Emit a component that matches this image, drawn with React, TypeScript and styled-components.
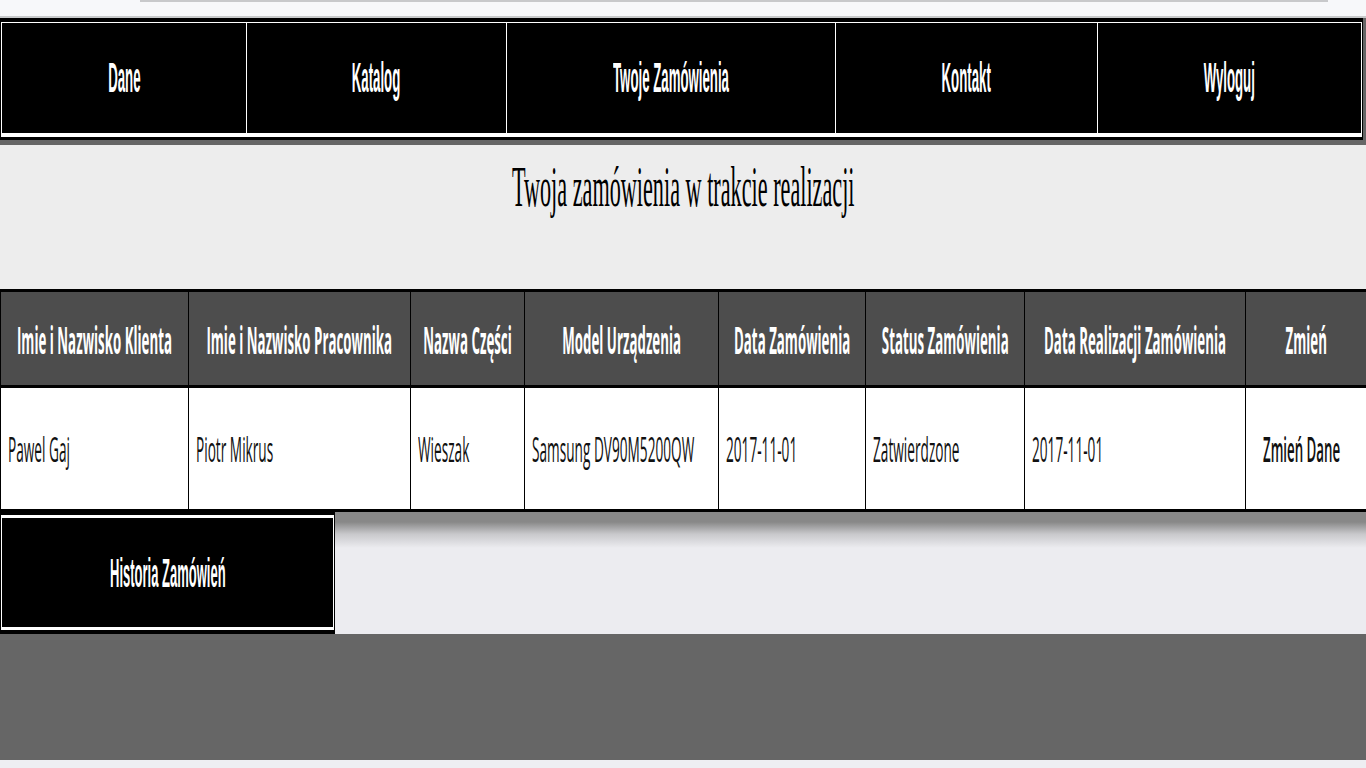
import React from "react";
import styled, { createGlobalStyle } from "styled-components";

const Global = createGlobalStyle`
  html, body { margin: 0; padding: 0; }
  body {
    background: #eeeef2;
    font-family: "Liberation Sans", Arial, sans-serif;
    overflow: hidden;
  }
`;

const Page = styled.div`
  width: 1366px;
  display: flex;
  flex-direction: column;
`;

const TopStrip = styled.div`
  height: 16px;
  background: #f7f8fa;
  border-bottom: 2px solid #c8cacb;
  display: flex;
`;

const ScrollThumb = styled.div`
  margin-left: 140px;
  width: 1188px;
  height: 2px;
  background: #c8c9cb;
`;

const NavShadow = styled.div`
  background: #666666;
  padding: 0 3px 5px 0;
`;

const NavFrame = styled.nav`
  background: #000;
  padding: 4px 1px 3px 1px;
`;

const NavGrid = styled.div`
  display: grid;
  grid-template-columns: 244px 259px 328px 261px 263px;
  grid-template-rows: 110px;
  gap: 1px;
  background: #fff;
  border: 1px solid #fff;
  border-bottom-width: 4px;
`;

const NavCell = styled.a`
  background: #000;
  display: flex;
  align-items: center;
  justify-content: center;
  overflow: hidden;
  color: #fff;
  text-decoration: none;
  font-family: "Liberation Sans", Arial, sans-serif;
  font-weight: 700;
  font-size: 42px;
  line-height: 1;
`;

const Squeeze = styled.span<{ $sx: number; $origin?: string }>`
  display: inline-block;
  flex: none;
  white-space: nowrap;
  transform: scaleX(${(p) => p.$sx});
  transform-origin: ${(p) => p.$origin ?? "center"};
`;

const TitleSection = styled.section`
  height: 144px;
  background: #ededed;
  display: flex;
  justify-content: center;
  align-items: flex-start;
  overflow: hidden;
`;

const Title = styled.h1`
  margin: 13px 0 0;
  font-family: "Liberation Serif", "Times New Roman", serif;
  font-weight: 400;
  font-size: 58px;
  line-height: 1;
  color: #000;
  display: flex;
  justify-content: center;
  width: 100%;
`;

const Table = styled.div`
  display: grid;
  grid-template-columns: 187px 221px 113px 193px 146px 158px 220px 120px;
  grid-template-rows: 93px 121px;
  column-gap: 1px;
  row-gap: 3px;
  padding: 3px 0 3px 1px;
  background: #000;
`;

const HeadCell = styled.div`
  background: #4d4d4d;
  color: #fff;
  display: flex;
  align-items: center;
  justify-content: center;
  overflow: hidden;
  font-family: "Open Sans", "Noto Sans", sans-serif;
  font-weight: 700;
  font-size: 38px;
  line-height: 1;
`;

const BodyCell = styled.div<{ $center?: boolean; $strong?: boolean }>`
  background: #fff;
  color: #111;
  display: flex;
  align-items: center;
  justify-content: ${(p) => (p.$center ? "center" : "flex-start")};
  padding: ${(p) => (p.$center ? "0 9px 0 0" : "0 0 0 7px")};
  overflow: hidden;
  font-family: "Open Sans", "Noto Sans", sans-serif;
  font-weight: ${(p) => (p.$strong ? 600 : 400)};
  font-size: 35px;
  line-height: 1;
`;

const BottomRow = styled.div`
  height: 122px;
  display: flex;
  background: linear-gradient(to bottom, #888888 0px, #888888 10px, #c8c8cb 22px, #ececf0 36px, #ececf0 100%);
`;

const HistoryFrame = styled.div`
  width: 333px;
  background: #000;
  padding: 3px 1px 4px 1px;
  display: flex;
`;

const HistoryButton = styled.a`
  flex: 1;
  background: #000;
  border: 1px solid #fff;
  border-top-width: 3px;
  border-bottom-width: 3px;
  display: flex;
  align-items: center;
  justify-content: center;
  overflow: hidden;
  color: #fff;
  text-decoration: none;
  font-family: "Liberation Sans", Arial, sans-serif;
  font-weight: 700;
  font-size: 40px;
  line-height: 1;
`;

const Footer = styled.footer`
  height: 126px;
  background: #666666;
`;

const navItems = ["Dane", "Katalog", "Twoje Zamówienia", "Kontakt", "Wyloguj"];

const headers = [
  "Imie i Nazwisko Klienta",
  "Imie i Nazwisko Pracownika",
  "Nazwa Części",
  "Model Urządzenia",
  "Data Zamówienia",
  "Status Zamówienia",
  "Data Realizacji Zamówienia",
  "Zmień",
];

const row = [
  "Pawel Gaj",
  "Piotr Mikrus",
  "Wieszak",
  "Samsung DV90M5200QW",
  "2017-11-01",
  "Zatwierdzone",
  "2017-11-01",
];

export default function App() {
  return (
    <Page>
      <Global />
      <TopStrip>
        <ScrollThumb />
      </TopStrip>
      <NavShadow>
        <NavFrame>
          <NavGrid>
            {navItems.map((t) => (
              <NavCell key={t} href="#">
                <Squeeze $sx={0.315}>{t}</Squeeze>
              </NavCell>
            ))}
          </NavGrid>
        </NavFrame>
      </NavShadow>
      <TitleSection>
        <Title>
          <Squeeze $sx={0.383}>Twoja zamówienia w trakcie realizacji</Squeeze>
        </Title>
      </TitleSection>
      <Table>
        {headers.map((h) => (
          <HeadCell key={h}>
            <Squeeze $sx={0.35}>{h}</Squeeze>
          </HeadCell>
        ))}
        {row.map((c, i) => (
          <BodyCell key={i}>
            <Squeeze $sx={0.39} $origin="left">
              {c}
            </Squeeze>
          </BodyCell>
        ))}
        <BodyCell $center $strong>
          <Squeeze $sx={0.38}>Zmień Dane</Squeeze>
        </BodyCell>
      </Table>
      <BottomRow>
        <HistoryFrame>
          <HistoryButton href="#">
            <Squeeze $sx={0.325}>Historia Zamówień</Squeeze>
          </HistoryButton>
        </HistoryFrame>
      </BottomRow>
      <Footer />
    </Page>
  );
}
